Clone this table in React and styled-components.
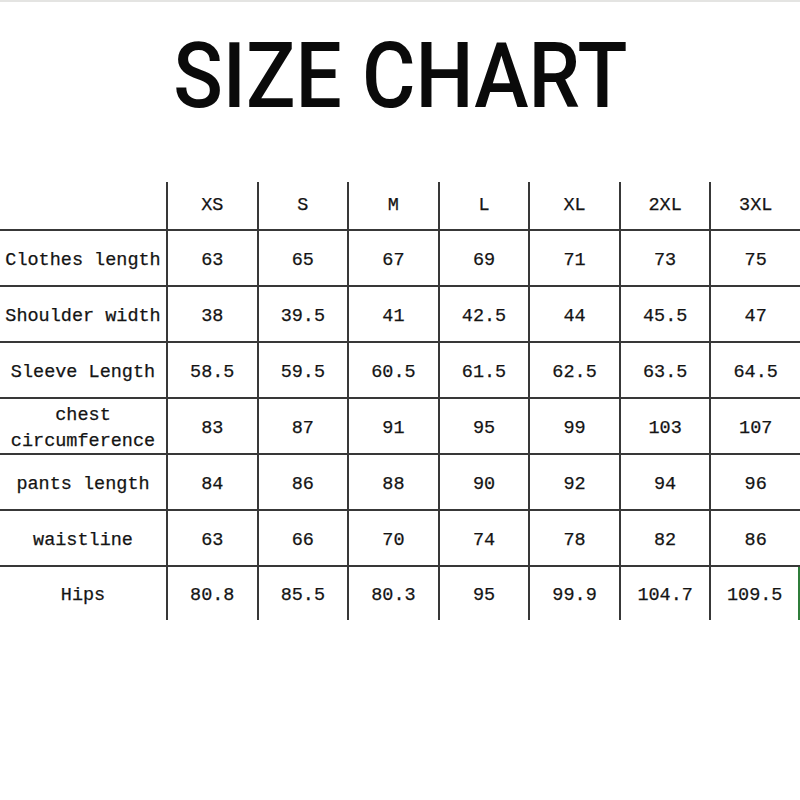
import React from "react";
import styled, { createGlobalStyle } from "styled-components";

const Global = createGlobalStyle`
  html, body {
    margin: 0;
    padding: 0;
    background: #ffffff;
  }
  #root {
    width: 800px;
    height: 800px;
    background: #ffffff;
  }
`;

const Page = styled.div`
  width: 800px;
  height: 800px;
  box-sizing: border-box;
  border-top: 2px solid #e4e4e2;
  display: flex;
  flex-direction: column;
  align-items: stretch;
`;

const TitleBar = styled.div`
  margin-top: 27px;
  height: 153px;
  display: flex;
  justify-content: center;
  align-items: flex-start;
`;

const Title = styled.h1`
  margin: 0;
  display: inline-block;
  font-family: Roboto, "Liberation Sans", sans-serif;
  font-weight: 500;
  font-size: 91px;
  line-height: 94px;
  letter-spacing: 0;
  color: #0a0a0a;
  transform: scaleX(0.9);
  transform-origin: center top;
  white-space: nowrap;
`;

const Table = styled.div`
  display: grid;
  grid-template-columns: 166px repeat(7, 1fr);
  grid-template-rows: 49px repeat(6, 56px) 53px;
  width: 800px;
  font-family: "Liberation Mono", "Courier New", monospace;
  font-size: 18.5px;
  color: #141414;
  -webkit-text-stroke: 0.25px #141414;
`;

const Cell = styled.div`
  box-sizing: border-box;
  display: flex;
  align-items: center;
  justify-content: center;
  text-align: center;
  line-height: 26px;
  padding-top: ${(p) => (p.$head ? "1px" : "5px")};
  border-left: ${(p) => (p.$first ? "none" : "2px solid #383838")};
  border-bottom: ${(p) => (p.$last ? "none" : "2px solid #383838")};
  border-right: ${(p) => (p.$edge ? "2px solid #2f7d3a" : "none")};
`;

const sizes = ["XS", "S", "M", "L", "XL", "2XL", "3XL"];

const rows = [
  ["Clothes length", ["63", "65", "67", "69", "71", "73", "75"]],
  ["Shoulder width", ["38", "39.5", "41", "42.5", "44", "45.5", "47"]],
  ["Sleeve Length", ["58.5", "59.5", "60.5", "61.5", "62.5", "63.5", "64.5"]],
  ["chest circumference", ["83", "87", "91", "95", "99", "103", "107"]],
  ["pants length", ["84", "86", "88", "90", "92", "94", "96"]],
  ["waistline", ["63", "66", "70", "74", "78", "82", "86"]],
  ["Hips", ["80.8", "85.5", "80.3", "95", "99.9", "104.7", "109.5"]],
];

export default function App() {
  return (
    <>
      <Global />
      <Page>
        <TitleBar>
          <Title>SIZE CHART</Title>
        </TitleBar>
        <Table>
          <Cell $first $head />
          {sizes.map((s) => (
            <Cell key={s} $head>
              {s}
            </Cell>
          ))}
          {rows.map(([label, vals], ri) => {
            const last = ri === rows.length - 1;
            return (
              <React.Fragment key={label}>
                <Cell $first $last={last}>
                  {label}
                </Cell>
                {vals.map((v, vi) => (
                  <Cell key={vi} $last={last} $edge={last && vi === vals.length - 1}>
                    {v}
                  </Cell>
                ))}
              </React.Fragment>
            );
          })}
        </Table>
      </Page>
    </>
  );
}
